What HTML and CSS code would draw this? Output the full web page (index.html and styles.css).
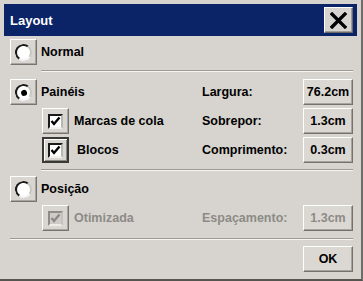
FILE: index.html
```html
<!DOCTYPE html>
<html>
<head>
<meta charset="utf-8">
<link rel="stylesheet" href="styles.css">
</head>
<body>
<div class="window">
  <div class="titlebar">
    <span class="title">Layout</span>
    <div class="close">
      <svg width="17" height="17" viewBox="0 0 16 16"><path d="M2 2 L14 14 M14 2 L2 14" stroke="#000" stroke-width="3.2" stroke-linecap="square" fill="none"/></svg>
    </div>
  </div>
  <div class="content">
    <div class="row">
      <div class="opt"><div class="box"><span class="radio"></span></div><span class="lbl">Normal</span></div>
    </div>
    <div class="sep indent"></div>
    <div class="group">
      <div class="row">
        <div class="opt"><div class="box"><span class="radio on"></span></div><span class="lbl">Painéis</span></div>
        <span class="field">Largura:</span>
        <div class="btn">76.2cm</div>
      </div>
      <div class="row">
        <div class="opt sub"><div class="box"><span class="check"><svg width="11" height="11" viewBox="0 0 11 11"><path d="M1.5 5 L4 8 L9.5 1.5" stroke="#000" stroke-width="2.4" fill="none"/></svg></span></div><span class="lbl">Marcas de cola</span></div>
        <span class="field">Sobrepor:</span>
        <div class="btn">1.3cm</div>
      </div>
      <div class="row">
        <div class="opt sub"><div class="box focus"><span class="check"><svg width="11" height="11" viewBox="0 0 11 11"><path d="M1.5 5 L4 8 L9.5 1.5" stroke="#000" stroke-width="2.4" fill="none"/></svg></span></div><span class="lbl wide">Blocos</span></div>
        <span class="field">Comprimento:</span>
        <div class="btn">0.3cm</div>
      </div>
    </div>
    <div class="sep indent mid"></div>
    <div class="group">
      <div class="row">
        <div class="opt"><div class="box"><span class="radio"></span></div><span class="lbl">Posição</span></div>
      </div>
      <div class="row">
        <div class="opt sub disabled"><div class="box"><span class="check dis"><svg width="11" height="11" viewBox="0 0 11 11"><path d="M1.5 5 L4 8 L9.5 1.5" stroke="#8a8a88" stroke-width="2.4" fill="none"/></svg></span></div><span class="lbl">Otimizada</span></div>
        <span class="field disabled">Espaçamento:</span>
        <div class="btn disabled">1.3cm</div>
      </div>
    </div>
    <div class="sep bottom"></div>
    <div class="row">
      <span class="spacer"></span>
      <span class="spacer"></span>
      <div class="btn">OK</div>
    </div>
  </div>
</div>
</body>
</html>
```

FILE: styles.css
```css
* { box-sizing: border-box; }
html, body { margin: 0; padding: 0; }
body {
  font-family: "Liberation Sans", Arial, sans-serif;
  font-weight: bold;
  font-size: 12.5px;
  color: #000;
  background: #d7d4cf;
}
.window {
  width: 363px;
  height: 281px;
  background: #d7d4cf;
  border-right: 2px solid #6f6e6b;
  border-bottom: 2px solid #55544f;
  padding: 4px 4px 0 4px;
  display: flex;
  flex-direction: column;
}
.titlebar {
  height: 32px;
  background: #0b2367;
  display: flex;
  align-items: center;
  justify-content: space-between;
  padding: 0 4px 0 6px;
}
.title {
  color: #fff;
  font-size: 13px;
}
.close {
  width: 29px;
  height: 26px;
  background: #d7d4cf;
  border: 1px solid;
  border-color: #fff #6a6a6a #6a6a6a #fff;
  box-shadow: inset -1px -1px 0 #a09d98;
  display: flex;
  align-items: center;
  justify-content: center;
}
.content {
  padding: 3px 4px 0 6px;
  display: flex;
  flex-direction: column;
}
.group {
  display: flex;
  flex-direction: column;
  gap: 3px;
}
.row {
  height: 26px;
  display: grid;
  grid-template-columns: 192px 101px 50px;
  align-items: center;
}
.opt {
  display: flex;
  align-items: center;
  gap: 4px;
  height: 26px;
}
.opt.sub { padding-left: 32px; gap: 5px; }
.box {
  width: 27px;
  height: 26px;
  background: #d9d6d1;
  border: 1px solid;
  border-color: #fff #76746f #76746f #fff;
  box-shadow: inset -1px -1px 0 #a8a5a0;
  display: flex;
  align-items: center;
  justify-content: center;
}
.box.focus {
  border: 2px solid #3a3936;
  box-shadow: inset 1px 1px 0 #fff, inset -1px -1px 0 #8a8883;
}
.radio {
  width: 17px;
  height: 17px;
  border-radius: 50%;
  background: #fff;
  border: 2.5px solid;
  border-color: #1a1a1a #c8c6c2 #f4f4f4 #1a1a1a;
  transform: rotate(-10deg);
  display: flex;
  align-items: center;
  justify-content: center;
}
.radio.on::after {
  content: "";
  width: 6px;
  height: 6px;
  border-radius: 50%;
  background: #000;
}
.check {
  width: 15px;
  height: 15px;
  background: #fff;
  border: 2px solid;
  border-color: #1a1a1a #b9b7b2 #f0f0f0 #1a1a1a;
  display: flex;
  align-items: center;
  justify-content: center;
}
.check.dis {
  background: #cfccc7;
  border-color: #8e8c88 #c4c2bd #ecebe8 #8e8c88;
}
.lbl.wide { padding-left: 3px; }
.disabled, .disabled .lbl { color: #8d8b87; }
.btn {
  width: 50px;
  height: 26px;
  background: #dbd8d3;
  border: 1px solid;
  border-color: #fff #74726d #74726d #fff;
  box-shadow: inset -1px -1px 0 #a6a39e;
  display: flex;
  align-items: center;
  justify-content: center;
}
.sep {
  height: 2px;
  border-top: 1px solid #9d9a95;
  border-bottom: 1px solid #f4f3f0;
}
.sep.indent { margin: 5px 0 7px 31px; }
.sep.indent.mid { margin: 6px 0 5px 31px; }
.sep.bottom { margin: 7px 0 6px 0; }
```
